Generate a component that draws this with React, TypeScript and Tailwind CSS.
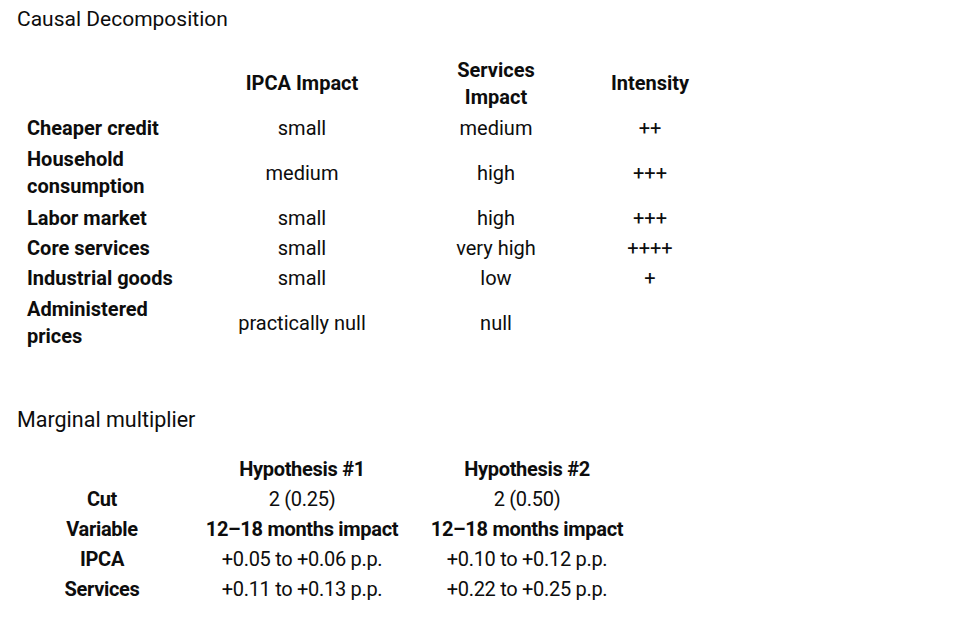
const causalRows = [
  { label: ["Cheaper credit"], ipca: "small", services: "medium", intensity: "++" },
  { label: ["Household", "consumption"], ipca: "medium", services: "high", intensity: "+++" },
  { label: ["Labor market"], ipca: "small", services: "high", intensity: "+++" },
  { label: ["Core services"], ipca: "small", services: "very high", intensity: "++++" },
  { label: ["Industrial goods"], ipca: "small", services: "low", intensity: "+" },
  { label: ["Administered", "prices"], ipca: "practically null", services: "null", intensity: "" },
];

const multRows = [
  { label: "Cut", h1: "2 (0.25)", h2: "2 (0.50)", bold: false },
  { label: "Variable", h1: "12–18 months impact", h2: "12–18 months impact", bold: true },
  { label: "IPCA", h1: "+0.05 to +0.06 p.p.", h2: "+0.10 to +0.12 p.p.", bold: false },
  { label: "Services", h1: "+0.11 to +0.13 p.p.", h2: "+0.22 to +0.25 p.p.", bold: false },
];

const cell = "flex items-center justify-center text-center";

export default function App() {
  return (
    <div className="w-[971px] h-[622px] bg-white text-[#0d0d0d] font-['Roboto','Noto_Sans',sans-serif] overflow-hidden">
      <h1 className="pl-[17px] pt-[6px] h-[54px] text-[21px] leading-[26px]">Causal Decomposition</h1>

      <div className="ml-[27px] grid grid-cols-[175px_200px_188px_120px] text-[20px] leading-[27px]">
        <div className="h-[59px]" />
        <div className={`${cell} h-[59px] font-bold`}>IPCA Impact</div>
        <div className={`${cell} h-[59px] font-bold`}>
          Services
          <br />
          Impact
        </div>
        <div className={`${cell} h-[59px] font-bold`}>Intensity</div>

        {causalRows.map((r) => {
          const h = r.label.length > 1 ? "h-[60px]" : "h-[30px]";
          return (
            <div key={r.label.join(" ")} className="contents">
              <div className={`${h} flex flex-col justify-center font-bold`}>
                {r.label.map((l) => (
                  <span key={l}>{l}</span>
                ))}
              </div>
              <div className={`${cell} ${h}`}>{r.ipca}</div>
              <div className={`${cell} ${h}`}>{r.services}</div>
              <div className={`${cell} ${h}`}>{r.intensity}</div>
            </div>
          );
        })}
      </div>

      <h2 className="pl-[17px] mt-[54px] h-[47px] text-[21.5px] leading-[26px]">Marginal multiplier</h2>

      <div className="ml-[40px] grid grid-cols-[144px_236px_214px] text-[20px] leading-[30px] tracking-[-0.3px]">
        <div className="pr-[20px]" />
        <div className={`${cell} font-bold`}>Hypothesis #1</div>
        <div className={`${cell} font-bold`}>Hypothesis #2</div>
        {multRows.map((r) => (
          <div key={r.label} className="contents">
            <div className={`${cell} pr-[20px] font-bold`}>{r.label}</div>
            <div className={`${cell} whitespace-nowrap ${r.bold ? "font-bold" : ""}`}>{r.h1}</div>
            <div className={`${cell} whitespace-nowrap ${r.bold ? "font-bold" : ""}`}>{r.h2}</div>
          </div>
        ))}
      </div>
    </div>
  );
}
